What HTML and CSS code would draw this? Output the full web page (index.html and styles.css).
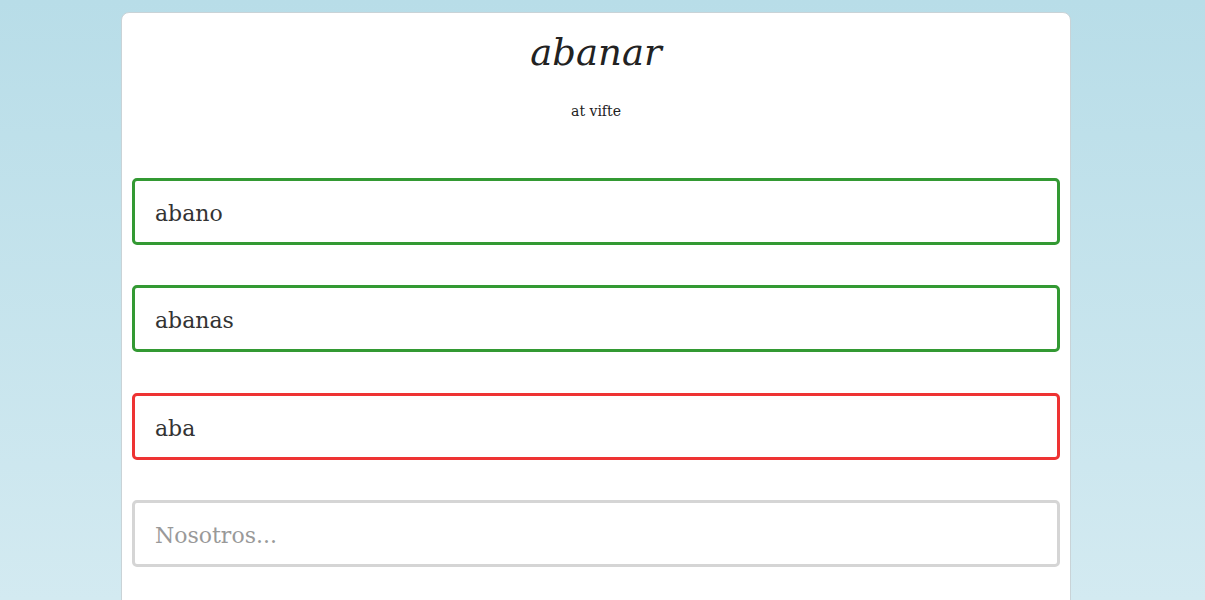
FILE: index.html
```html
<!DOCTYPE html>
<html lang="es">
<head>
<meta charset="utf-8">
<title>abanar</title>
<link rel="stylesheet" href="styles.css">
</head>
<body>
<main class="card">
  <header class="head">
    <h1 class="title">abanar</h1>
    <p class="subtitle">at vifte</p>
  </header>
  <form class="answers">
    <input class="field field-ok" type="text" value="abano">
    <input class="field field-ok" type="text" value="abanas">
    <input class="field field-bad" type="text" value="aba">
    <input class="field" type="text" placeholder="Nosotros...">
    <input class="field" type="text" placeholder="">
  </form>
</main>
</body>
</html>
```

FILE: styles.css
```css
html {
  height: 100%;
}
body {
  margin: 0;
  padding: 12px 13px 0 0;
  min-height: 100%;
  box-sizing: border-box;
  background: linear-gradient(to bottom, #b8dde8 0%, #d3eaf1 600px, #d8edf3 100%);
  background-attachment: fixed;
  font-family: Georgia, "DejaVu Serif", serif;
  color: #222;
}
.card {
  width: 950px;
  margin: 0 auto;
  background: #fff;
  border: 1px solid #c9d3d7;
  border-radius: 8px;
  padding: 0 10px 40px;
  box-sizing: border-box;
}
.head {
  text-align: center;
  padding-top: 20px;
}
.title {
  margin: 0;
  font-style: italic;
  font-weight: normal;
  font-size: 37px;
  line-height: 40px;
  color: #222;
}
.subtitle {
  margin: 30px 0 0;
  font-size: 14px;
  line-height: 16px;
}
.answers {
  display: flex;
  flex-direction: column;
  gap: 40.4px;
  margin-top: 59px;
}
.field {
  display: block;
  width: 100%;
  height: 67px;
  box-sizing: border-box;
  border: 3px solid #d5d5d5;
  border-radius: 5px;
  padding: 4px 20px 0;
  font-family: Georgia, "DejaVu Serif", serif;
  font-size: 22px;
  color: #333;
  background: #fff;
  outline: none;
}
.field::placeholder {
  color: #999;
}
.field-ok {
  border-color: #339933;
}
.field-bad {
  border-color: #ee3333;
}
```
